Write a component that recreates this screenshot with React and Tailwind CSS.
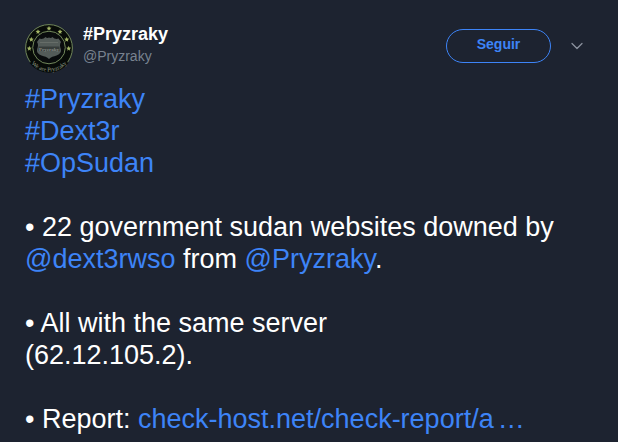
import { ChevronDown } from "lucide-react";

const starAngles = [-90, -56, -124, -26, -154, 1, 179];

function Avatar() {
  return (
    <svg viewBox="0 0 48 48" className="w-12 h-12 shrink-0 overflow-visible" aria-hidden="true">
      <circle cx="24" cy="24" r="23.4" fill="#070b08" stroke="#71875a" strokeWidth="1" />
      <circle cx="24" cy="23.5" r="16.3" fill="#090c0d" stroke="#71875a" strokeWidth="1" />
      {starAngles.map((angle) => {
        const rad = (angle * Math.PI) / 180;
        const x = 24 + 19.7 * Math.cos(rad);
        const y = 24 + 19.7 * Math.sin(rad);
        return (
          <path
            key={angle}
            transform={`translate(${x} ${y})`}
            d="M0-2.500.7-.8 2.500-.6 1.100.6 1.500 2.300 0 1.300-1.500 2.300-1.100.6-2.500-.6-.7-.8Z"
            fill="#a3b565"
          />
        );
      })}
      {/* shield */}
      <path
        d="M14.500 14.500c2 .9 4.500.2 6-1.500 1 1 2.300 1.300 3.500.6 1.200.7 2.500.4 3.500-.6 1.500 1.700 4 2.400 6 1.500l2.500 3.500c-1.600 2.500-1 4.500-.2 7 1 3.200-1.300 5.500-4.300 6.500-3 1-5.500 1.400-7.500 3.500-2-2.100-4.500-2.500-7.500-3.500-3-1-5.300-3.300-4.300-6.500.8-2.500 1.400-4.500-.2-7Z"
        fill="#535b58"
      />
      <path d="M15 18.500h18" stroke="#666d68" strokeWidth="1" />
      <path d="M13.500 22.500h21v4.500h-21z" fill="#363c3a" />
      <text x="24" y="26.5" textAnchor="middle" fontSize="5" fontWeight="bold" fill="#858b86" className="font-['Liberation_Serif']">
        Pryzraky
      </text>
      {/* motto on the lower rim */}
      <path d="M6.500 37.500A22 22 0 0 0 41.500 37.500" fill="none" stroke="#070b08" strokeWidth="5" />
      <path id="motto" d="M2.500 34A23.800 23.800 0 0 0 45.500 34" fill="none" />
      <text fontSize="6" fill="#98a18f" textAnchor="middle" className="font-['Liberation_Serif']">
        <textPath href="#motto" startOffset="50%">We are Pryzraky</textPath>
      </text>
    </svg>
  );
}

function TweetLink({ href = "#", children }) {
  return (
    <a href={href} className="text-[#3d84f7] hover:underline">
      {children}
    </a>
  );
}

export default function App() {
  return (
    <article className="min-h-screen bg-[#1d2330] px-[25px] pt-6 font-['Liberation_Sans',Arial,sans-serif] text-white">
      <header className="flex items-start justify-between">
        <a href="#" className="flex gap-2.5">
          <Avatar />
          <div>
            <p className="text-lg leading-5 font-bold">#Pryzraky</p>
            <p className="text-sm leading-6 text-[#78828f]">@Pryzraky</p>
          </div>
        </a>
        <div className="flex items-center gap-4 pt-[5px] pr-1.5">
          <button className="h-[34px] w-[105px] rounded-full border border-[#3d84f7] pb-1 text-sm font-bold text-[#3d84f7]">
            Seguir
          </button>
          <button aria-label="Más opciones" className="text-[#8b929e]">
            <ChevronDown size={20} strokeWidth={1.5} />
          </button>
        </div>
      </header>

      {/* Tweet text */}
      <div className="mt-[11px] text-[27px] leading-8">
        <p><TweetLink>#Pryzraky</TweetLink></p>
        <p><TweetLink>#Dext3r</TweetLink></p>
        <p><TweetLink>#OpSudan</TweetLink></p>
        <p className="mt-8">
          • 22 government sudan websites downed by <br />
          <TweetLink>@dext3rwso</TweetLink> from <TweetLink>@Pryzraky</TweetLink>.
        </p>
        <p className="mt-8">
          • All with the same server
          <br />
          (62.12.105.2).
        </p>
        <p className="mt-8">
          • Report: <TweetLink>check-host.net/check-report/a</TweetLink>
          <span className="ml-1 text-[#3d84f7]">…</span>
        </p>
      </div>
    </article>
  );
}
